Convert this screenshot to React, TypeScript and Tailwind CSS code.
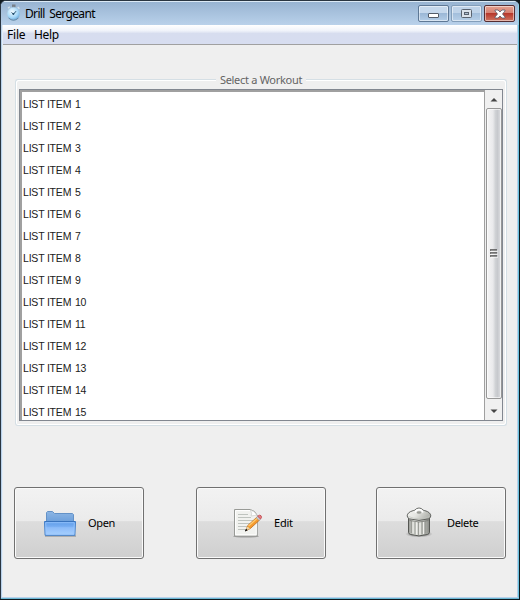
import React from 'react';

function Stopwatch() {
  return (
    <svg width="16" height="18" viewBox="0 0 16 18" className="block shrink-0">
      <defs>
        <radialGradient id="watch" cx=".4" cy=".35" r=".75">
          <stop offset="0" stopColor="#f2fbff" />
          <stop offset=".6" stopColor="#a4d7f8" />
          <stop offset="1" stopColor="#5799d0" />
        </radialGradient>
      </defs>
      <path d="M6 .5h3.5v3H6z" fill="#777f88" />
      <path d="M2 4.3l1.7-1.5M11.7 3l1.7 1.7" stroke="#d5e2eb" strokeWidth="1.5" />
      <circle cx="7.5" cy="9.7" r="6.5" fill="url(#watch)" stroke="#a9c8de" strokeWidth=".6" />
      <path d="M2.6 14Q7.5 18.5 12.4 14" stroke="#6588a5" fill="none" />
      <path d="M5.5 8.5l2 1.7L10 7.2" stroke="#24506f" strokeWidth="1" fill="none" />
      <circle cx="7.4" cy="10" r=".9" fill="#24506f" />
    </svg>
  );
}

function FolderIcon() {
  return (
    <svg width="34" height="28" viewBox="0 0 34 28" className="mt-[2px] block">
      <defs>
        <linearGradient id="folderBack" x2="0" y2="1">
          <stop stopColor="#8db6e4" />
          <stop offset="1" stopColor="#6c9fdb" />
        </linearGradient>
        <linearGradient id="folderFront" x2="0" y2="1">
          <stop stopColor="#5c9be9" />
          <stop offset=".35" stopColor="#76adf2" />
          <stop offset=".45" stopColor="#8dbcf9" />
          <stop offset="1" stopColor="#a8d1ff" />
        </linearGradient>
      </defs>
      <path d="M2.5 12V2.5l1-1h5l2 2h18l1 1V12z" fill="url(#folderBack)" stroke="#6492c7" />
      <path d="M1 26h31" stroke="#777" strokeWidth="1.2" opacity=".7" />
      <path d="M.5 11.5h31l-.6 13.8H1.1z" fill="url(#folderFront)" stroke="#427fc9" />
      <path d="M1.7 12.7h28.6l-.5 11.6H2.2z" fill="none" stroke="#9bc7fc" strokeWidth=".8" />
      <path d="M1 11.5h30" stroke="#3974be" />
    </svg>
  );
}

function EditIcon() {
  return (
    <svg width="30" height="31" viewBox="0 0 30 31" className="block">
      <ellipse cx="13" cy="28.3" rx="13" ry="1.2" fill="#777" opacity=".6" />
      <path d="M1.5 1.5h15.8q5 1 7 6v20.5H1.5z" fill="#f1f2ef" stroke="#989a96" />
      <path d="M2.6 2.6h14.7M2.6 3v23.8h20.6V8" fill="none" stroke="#fff" />
      <path d="M17.5 2q2 4 .5 6 4-1 6.2 0-2-5-6.7-6z" fill="#fff" stroke="#c2c5c0" strokeWidth=".6" />
      <path d="M5 6.5h10M5 9.5h13M5 12.5h15M5 15.5h12M5 18.5h10M5 21.5h7" stroke="#bfc4bf" />
      <path d="M12.7 22.8l2.1-5.3L24 9l2.8 2.8-9.4 8.7z" fill="#f59a2e" stroke="#bd6c1c" strokeWidth=".8" />
      <path d="M15.5 18L24.5 10" stroke="#ffcc70" strokeWidth="1.2" />
      <path d="M12.7 22.8l1.6-4.2 2.7 2z" fill="#ead6a8" />
      <path d="M12.4 23l.7-1.8 1.1.9z" fill="#222" stroke="#222" />
      <path d="M23.3 9.7l1.4-1.4 3 2.9-1.6 1.4z" fill="#c4cbd6" stroke="#8e929b" strokeWidth=".4" />
      <path d="M24.7 8.2q2-1.8 3.3-.5 1.3 1.4-.4 3.3z" fill="#ec7d80" stroke="#bd4e55" strokeWidth=".9" />
    </svg>
  );
}

function TrashIcon() {
  return (
    <svg width="28" height="32" viewBox="0 0 28 32" className="block">
      <defs>
        <linearGradient id="metal" x2="1">
          <stop stopColor="#999b96" />
          <stop offset=".3" stopColor="#e0e2dd" />
          <stop offset=".6" stopColor="#d0d2cd" />
          <stop offset="1" stopColor="#898b86" />
        </linearGradient>
        <linearGradient id="lid" x2="1" y2=".4">
          <stop stopColor="#f6f6f4" />
          <stop offset=".5" stopColor="#e5e6e2" />
          <stop offset="1" stopColor="#b1b3ad" />
        </linearGradient>
        <radialGradient id="shade">
          <stop offset=".5" stopColor="#555" stopOpacity=".5" />
          <stop offset="1" stopColor="#555" stopOpacity="0" />
        </radialGradient>
      </defs>
      <ellipse cx="14" cy="27" rx="13.8" ry="3.5" fill="url(#shade)" />
      <path d="M3.5 11h21v14.5q-.3 1.5-2 2-8.5 2.8-17 0-1.7-.5-2-2z" fill="url(#metal)" stroke="#555753" />
      <path d="M6.5 14v12M10 15v12.5M13.5 15v13M17 15v12.5M20.5 14v12.5" stroke="#9b9d97" strokeWidth="1.1" />
      <path d="M8 14v12.5M11.5 15v12.5M15 15v12.5M18.5 15v12" stroke="#f0f0ec" />
      <path d="M4.5 13.5q9.5 3 19 0" stroke="#777974" strokeWidth=".8" fill="none" />
      <path d="M2.2 8.9q.2-3.7 6-5.3l1.5-.4 2.2-1.7q2.1-1 4.2 0l2.2 1.7 1.5.4q5.8 1.6 6 5.3 0 2-2.4 3-9.4 3-18.8 0-2.4-1-2.4-3z" fill="url(#lid)" stroke="#555753" strokeWidth=".9" />
      <path d="M3.5 9.5q10.5 4.5 21 0" stroke="#c2c4be" strokeWidth=".7" fill="none" />
      <path d="M10 5.5q1-3 4-3t4 3" stroke="#fff" strokeWidth="1.4" fill="none" />
      <ellipse cx="14" cy="5.5" rx="2.3" ry="1.2" fill="#999b95" />
    </svg>
  );
}

function ActionButton({ label, icon, className }: { label: string; icon: React.ReactNode; className: string }) {
  return (
    <button className="h-[72px] w-[130px] rounded-[3px] border border-[#707070] bg-[linear-gradient(#f2f2f2_0%,#ebebeb_47%,#dddddd_48%,#cfcfcf_100%)] p-0 shadow-[inset_0_0_0_1px_#fafafa]">
      <span className={`flex h-full items-center text-[11px] text-black ${className}`}>
        {icon}
        <span className="whitespace-nowrap">{label}</span>
      </span>
    </button>
  );
}

const windowControl = 'flex h-[17px] items-center justify-center rounded-[2px] border shadow-[inset_0_0_0_1px_rgba(255,255,255,0.5)]';

export default function App() {
  const items = Array.from({ length: 15 }, (_, index) => index + 1);
  return (
    <div className="h-[600px] w-[520px] bg-[#10191e] font-['Noto_Sans',sans-serif]">
      <div className="flex h-[599px] w-[519px] flex-col overflow-hidden rounded-t-[6px] border-l border-t border-[#293541] bg-[#b9d1ea]">
        <header className="flex h-[24px] shrink-0 items-start border-r border-t border-r-[#8fd0e8] border-t-[#dceaf6] bg-[linear-gradient(#98b4d2,#b9d1ea)] pl-[5px] pr-[3px] text-black">
          <div className="pt-[2px]"><Stopwatch /></div>
          <h1 className="ml-[3px] mt-[3px] flex-1 whitespace-nowrap text-[12px] font-normal leading-[17px] tracking-[-0.65px] [word-spacing:2px]">Drill Sergeant</h1>
          <div className="mt-[3px] flex gap-[2px]">
            <button className={`${windowControl} w-[31px] border-[#5e7895] bg-[linear-gradient(#c5d8ec_45%,#99b6d5_46%,#b3cde7)]`}>
              <span className="mt-[3px] h-[5px] w-[11px] rounded-[1px] border border-[#535c68] bg-white" />
            </button>
            <button className={`${windowControl} w-[31px] border-[#839eba] bg-[linear-gradient(#bfd3e9_45%,#a1bddb_46%,#b7cfe8)]`}>
              <svg width="11" height="9" viewBox="0 0 11 9">
                <rect x=".5" y=".5" width="10" height="8" rx="1" fill="#dbe2eb" stroke="#59626f" />
                <rect x="3.5" y="3.5" width="4" height="2" fill="#aebed1" stroke="#59626f" />
              </svg>
            </button>
            <button className={`${windowControl} w-[31px] border-[#542d32] bg-[linear-gradient(#e5a190_0%,#d58173_45%,#b53328_46%,#cf7460_100%)]`}>
              <svg width="12" height="10" viewBox="0 0 12 10">
                <path d="M1 1h3l2 2 2-2h3v1L8.5 5 11 8v1H8L6 7 4 9H1V8l2.5-3L1 2z" fill="white" stroke="#555b6a" strokeWidth=".8" />
              </svg>
            </button>
          </div>
        </header>

        <div className="flex min-h-0 flex-1 flex-col border-l border-r border-b border-l-[#b9d1ea] border-r-[#6bc3df] border-b-[#b9d1ea]">
          <div className="flex min-h-0 flex-1 flex-col border-l border-r border-l-[#e2edf7] border-r-[#b9d1ea] bg-[#efefef]">
            <nav className="flex h-[20px] shrink-0 border-b border-[#a0a0a0] bg-[linear-gradient(#fff_0%,#f0f3fa_30%,#d7ddef_45%,#d7ddf0_100%)] pl-[4px] text-[12px] leading-[20px] text-black">
              <span className="w-[27px] tracking-[-0.2px]">File</span>
              <span className="tracking-[-0.3px]">Help</span>
            </nav>

            <main className="flex flex-1 flex-col pl-[12px] pt-[27px]">
              <section>
                <div className="flex h-[14px] w-[492px] items-center text-[11px] leading-[14px] text-[#646464]">
                  <div className="h-[7px] flex-1 self-end rounded-tl-[3px] border-l border-t border-[#d5dfe5] shadow-[inset_1px_1px_0_white]" />
                  <h2 className="w-[90px] whitespace-nowrap pt-[2px] text-center font-normal tracking-[-0.3px]">Select a Workout</h2>
                  <div className="h-[7px] flex-1 self-end rounded-tr-[3px] border-r border-t border-[#d5dfe5] shadow-[inset_-1px_1px_0_white]" />
                </div>
                <div className="h-[340px] w-[492px] rounded-b-[3px] border-x border-b border-[#d5dfe5] px-[3px] pt-[3px] shadow-[inset_1px_0_0_white,inset_-1px_-1px_0_white]">
                  <div className="flex h-[332px] w-[484px] border border-[#828790] bg-[#f0f0f0]">
                    <ul className="h-full flex-1 overflow-hidden border-l-2 border-r border-t-2 border-[#a0a0a0] bg-white pl-px pt-px font-['Liberation_Sans',Arial,sans-serif] text-[10.5px] text-[#202020]">
                      {items.map((item) => <li key={item} className="h-[22px] whitespace-nowrap leading-[22px] tracking-[-0.2px]">LIST ITEM <span className="ml-px">{item}</span></li>)}
                    </ul>
                    <div className="flex w-[17px] flex-col items-center">
                      <div className="flex h-[18px] items-center justify-center">
                        <svg width="8" height="5" viewBox="0 0 8 5"><path d="M.5 4.5h7L4 1z" fill="#454545" /></svg>
                      </div>
                      <div className="flex h-[291px] w-[16px] items-center justify-center rounded-[2px] border border-[#979797] bg-[linear-gradient(90deg,#f5f5f5_0%,#eaeaec_42%,#d0d2d5_60%,#c7c9cd_75%,#dedfe2_100%)] shadow-[inset_0_0_0_1px_rgba(255,255,255,0.6)]">
                        <svg width="8" height="9" viewBox="0 0 8 9">
                          <path d="M0 1h7M0 4h7M0 7h7" stroke="#4c4c4c" strokeWidth="1.5" />
                          <path d="M1 2.2h7M1 5.2h7M1 8.2h7" stroke="#fff" strokeWidth=".8" />
                        </svg>
                      </div>
                      <div className="flex flex-1 items-center justify-center pt-[3px]">
                        <svg width="8" height="5" viewBox="0 0 8 5"><path d="M.5.5h7L4 4z" fill="#454545" /></svg>
                      </div>
                    </div>
                  </div>
                </div>
              </section>

              <footer className="ml-[-1px] mt-[61px] flex">
                <ActionButton label="Open" icon={<FolderIcon />} className="gap-[10px] pl-[29px] tracking-[-0.35px]" />
                <div className="ml-[52px]"><ActionButton label="Edit" icon={<EditIcon />} className="gap-[11px] pl-[36px] tracking-[-0.2px]" /></div>
                <div className="ml-[50px]"><ActionButton label="Delete" icon={<TrashIcon />} className="gap-[14px] pl-[28px] tracking-[-0.35px]" /></div>
              </footer>
            </main>
          </div>
        </div>
        <div className="h-px shrink-0 bg-[#6ab7d3]" />
      </div>
    </div>
  );
}
